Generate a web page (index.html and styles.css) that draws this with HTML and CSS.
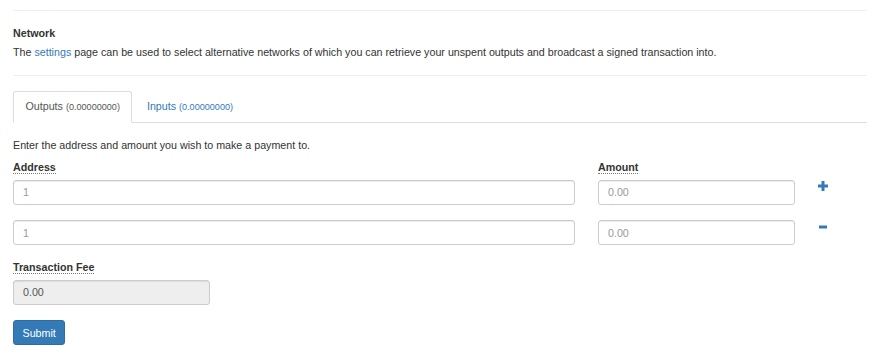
FILE: index.html
```html
<!DOCTYPE html>
<html lang="en">
<head>
    <meta charset="UTF-8">
    <meta name="viewport" content="width=device-width, initial-scale=1.0">
    <title>New Transaction</title>
    <link rel="stylesheet" href="styles.css">
</head>
<body>
    <div class="container">
        <hr>
        <label class="net-title">Network</label>
        <p class="net-text">The <a href="#settings">settings</a> page can be used to select alternative networks of which you can retrieve your unspent outputs and broadcast a signed transaction into.</p>
        <hr class="gap">

        <ul class="nav-tabs">
            <li class="active"><a href="#outputs">Outputs <small>(0.00000000)</small></a></li>
            <li><a href="#inputs">Inputs <small>(0.00000000)</small></a></li>
        </ul>

        <div class="tab-content">
            <p class="lead-text">Enter the address and amount you wish to make a payment to.</p>

            <div class="out-grid">
                <label><abbr title="The address to send to">Address</abbr></label>
                <label><abbr title="The amount to send">Amount</abbr></label>
                <span></span>

                <input class="form-control" type="text" placeholder="1">
                <input class="form-control" type="text" placeholder="0.00">
                <a href="#" class="row-icon" title="Add output">
                    <svg width="10" height="10" viewBox="0 0 10 10"><rect x="3.5" y="0" width="3" height="10"/><rect x="0" y="3.5" width="10" height="3"/></svg>
                </a>

                <input class="form-control row-two" type="text" placeholder="1">
                <input class="form-control row-two" type="text" placeholder="0.00">
                <a href="#" class="row-icon row-two" title="Remove output">
                    <svg width="10" height="10" viewBox="0 0 10 10"><rect x="1" y="3.5" width="8" height="3"/></svg>
                </a>
            </div>

            <label class="fee-label"><abbr title="The fee paid to the network">Transaction Fee</abbr></label>
            <input class="form-control fee" type="text" value="0.00" readonly>

            <button class="btn-primary">Submit</button>
        </div>
    </div>
</body>
</html>
```

FILE: styles.css
```css
body {
    margin: 0;
    padding-top: 10px;
    font-family: "Liberation Sans", Arial, sans-serif;
    font-size: 10.7px;
    line-height: 15.3px;
    color: #333;
    background: #fff;
}
.container {
    padding: 0 15px 0 13px;
}
a {
    color: #337ab7;
    text-decoration: none;
}
hr {
    margin: 0 0 15px;
    border: 0;
    border-top: 1px solid #eee;
}
hr.gap {
    margin-top: 14px;
}
label {
    display: block;
    font-weight: bold;
}
.net-title {
    margin-bottom: 4px;
}
.net-text {
    margin: 0;
}
abbr {
    text-decoration: none;
    border-bottom: 1px dotted #777;
    cursor: help;
}
.nav-tabs {
    display: flex;
    list-style: none;
    margin: 0;
    padding: 0;
    border-bottom: 1px solid #ddd;
}
.nav-tabs li {
    margin-bottom: -1px;
}
.nav-tabs a {
    display: block;
    padding: 7px 11.5px;
    margin-right: 2px;
    border: 1px solid transparent;
    border-radius: 3px 3px 0 0;
}
.nav-tabs .active a {
    color: #555;
    background: #fff;
    border-color: #ddd #ddd transparent;
}
.nav-tabs small {
    font-size: 85%;
}
.tab-content {
    padding-top: 15px;
}
.lead-text {
    margin: 0 0 7px;
}
.out-grid {
    display: grid;
    grid-template-columns: 562px 197px 1fr;
    column-gap: 23px;
    row-gap: 4.4px;
}
.out-grid .row-two {
    margin-top: 11px;
}
.form-control {
    box-sizing: border-box;
    display: block;
    width: 100%;
    height: 25px;
    padding: 0 9px;
    font-family: inherit;
    font-size: 10.7px;
    color: #555;
    background: #fff;
    border: 1px solid #ccc;
    border-radius: 3px;
    box-shadow: inset 0 1px 1px rgba(0,0,0,0.075);
}
.form-control::placeholder {
    color: #999;
}
.row-icon {
    display: block;
    padding-top: 1.5px;
    line-height: 0;
}
.row-icon svg {
    fill: #337ab7;
}
.fee-label {
    display: inline-block;
    margin-top: 14.6px;
    margin-bottom: 4.6px;
}
.form-control.fee {
    width: 197px;
    background: #eee;
}
.btn-primary {
    display: block;
    margin-top: 15px;
    height: 25.5px;
    padding: 0 8.5px;
    font-family: inherit;
    font-size: 10.7px;
    color: #fff;
    background: #337ab7;
    border: 1px solid #2e6da4;
    border-radius: 3px;
    cursor: pointer;
}
```
